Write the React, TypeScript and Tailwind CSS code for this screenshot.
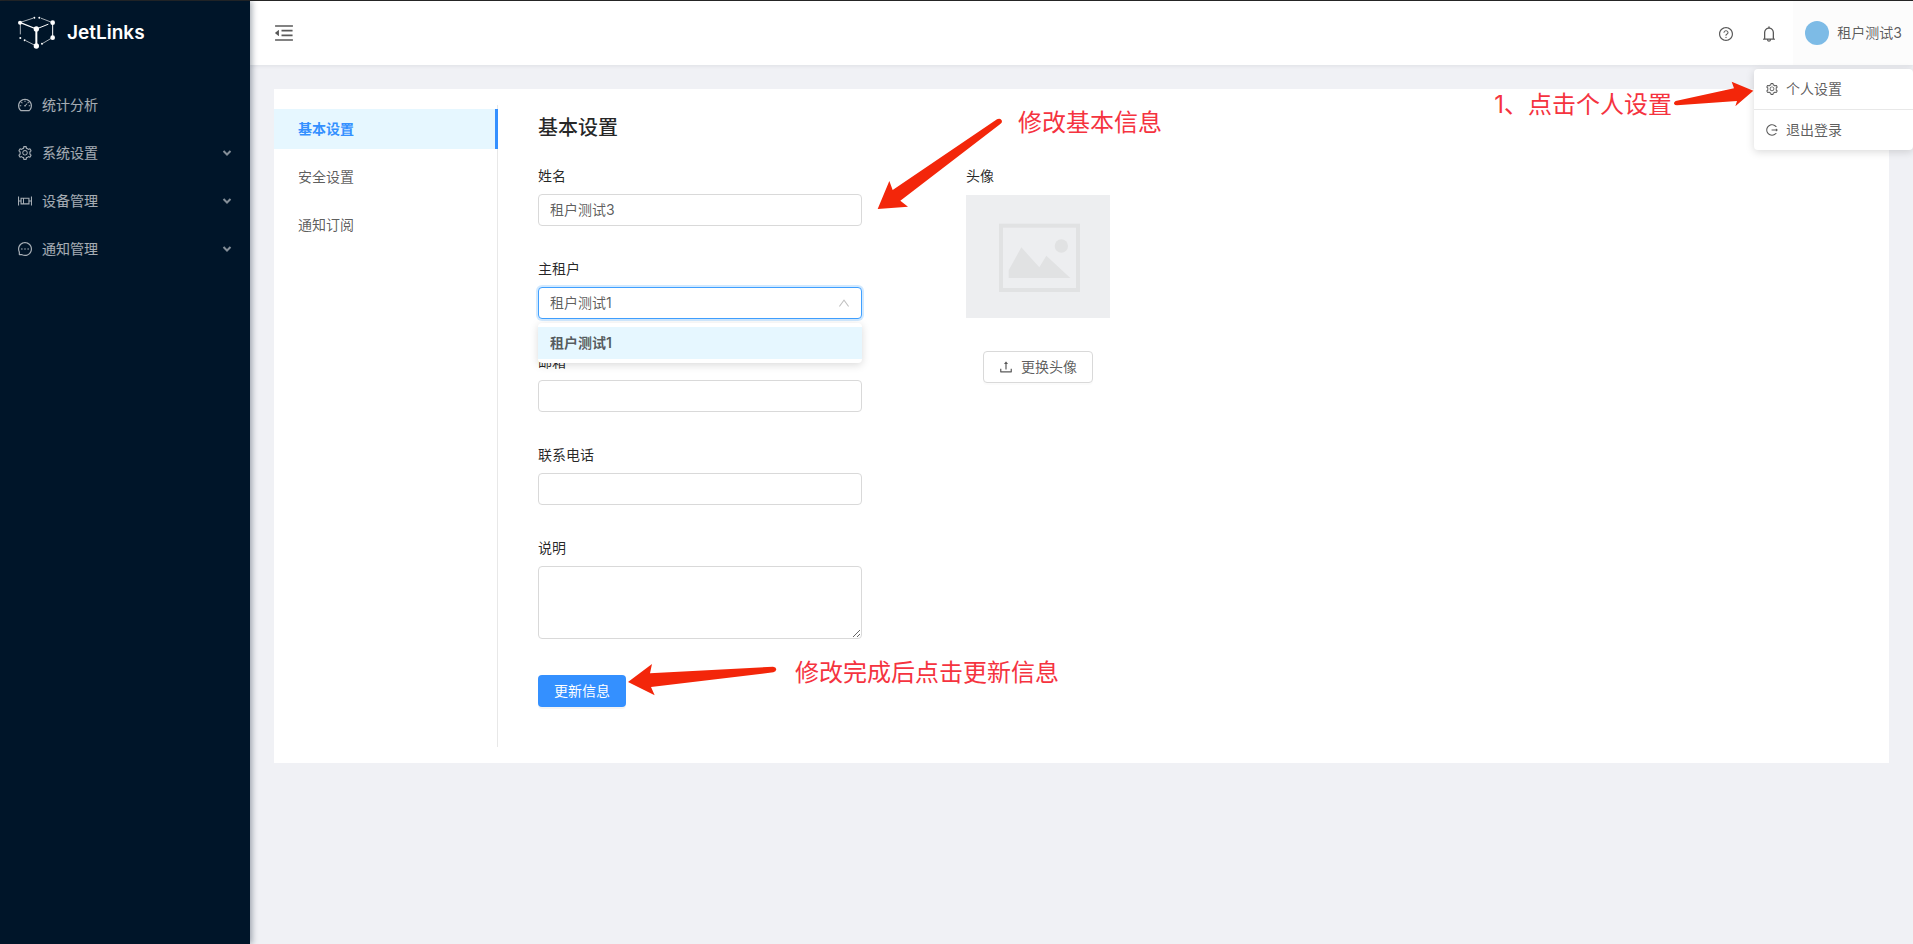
import React, { useState } from "react";
import type { IconType } from "react-icons";
import {
  AiOutlineBell,
  AiOutlineBoxPlot,
  AiOutlineDashboard,
  AiOutlineLogout,
  AiOutlineMenuFold,
  AiOutlineMessage,
  AiOutlineQuestionCircle,
  AiOutlineSetting,
  AiOutlineUp,
  AiOutlineUpload,
} from "react-icons/ai";

// antd crops its glyphs to this box
const ICON_BOX = "64 64 896 896";

const siderMenu: { label: string; icon: IconType; children: boolean }[] = [
  { label: "统计分析", icon: AiOutlineDashboard, children: false },
  { label: "系统设置", icon: AiOutlineSetting, children: true },
  { label: "设备管理", icon: AiOutlineBoxPlot, children: true },
  { label: "通知管理", icon: AiOutlineMessage, children: true },
];

const settingTabs = [
  { label: "基本设置", value: "base" },
  { label: "安全设置", value: "security" },
  { label: "通知订阅", value: "notification" },
];

const tenants = ["租户测试1"];

const inputClass =
  "block w-full h-8 rounded border border-[#d9d9d9] bg-white px-[11px] pb-0.5 text-black/65 outline-none";
const labelClass = "block mb-2 leading-5 text-black/85";

const Logo = () => (
  <svg width="38" height="34" viewBox="54 48 114 102" fill="#fff" stroke="#fff">
    <g strokeLinecap="round">
      <path d="M61 68L109 87" strokeWidth="4" />
      <path d="M109 87L144 73M158 68V113" strokeWidth="3" />
      <path d="M109 87V138" strokeWidth="6" />
      <path d="M61 70V102M61 67L98 55M158 68L124 55M103 135L79 123M152 116L130 129" strokeWidth="2" />
    </g>
    <g stroke="none">
      <circle cx="60" cy="68" r="6" />
      <circle cx="158" cy="68" r="7" />
      <circle cx="109" cy="87" r="8" />
      <circle cx="109" cy="138" r="8" />
      <circle cx="158" cy="113" r="7" />
      <circle cx="103" cy="53" r="3" />
      <circle cx="118" cy="53" r="3" />
      <circle cx="61" cy="114" r="3" />
      <circle cx="74" cy="121" r="3" />
      <circle cx="126" cy="131" r="3" />
    </g>
  </svg>
);

const Sider = () => (
  <aside className="relative z-20 w-[250px] shrink-0 bg-[#001529] shadow-[2px_0_6px_rgba(0,21,41,0.35)]">
    <a href="#" className="flex h-16 items-center gap-[11px] pl-[18px] text-white">
      <Logo />
      <h1 className="text-[19px] font-semibold">JetLinks</h1>
    </a>
    <nav className="flex flex-col gap-2 pt-5">
      {siderMenu.map(({ label, icon: Icon, children }) => (
        <a key={label} href="#" className="flex h-10 items-center gap-[10px] px-[18px] text-white/65">
          <Icon size={14} viewBox={ICON_BOX} />
          <span className="flex-1">{label}</span>
          {children && (
            <svg width="10" height="8" viewBox="0 0 10 8" fill="none" stroke="currentColor" strokeWidth="2" className="opacity-80">
              <path d="M1.5 2L5 5.5L8.5 2" />
            </svg>
          )}
        </a>
      ))}
    </nav>
  </aside>
);

const UserMenu = () => (
  <div className="absolute right-0 top-[68px] w-[159px] rounded bg-white py-1 text-black/65 shadow-[0_2px_8px_rgba(0,0,0,0.15)]">
    <button type="button" className="flex h-8 w-full items-center gap-2 px-3">
      <AiOutlineSetting size={12} viewBox={ICON_BOX} />
      个人设置
    </button>
    <hr className="my-1 border-[#e8e8e8]" />
    <button type="button" className="flex h-8 w-full items-center gap-2 px-3">
      <AiOutlineLogout size={12} viewBox={ICON_BOX} />
      退出登录
    </button>
    <div className="absolute right-full top-[11px] flex whitespace-nowrap text-2xl leading-[50px] text-[#f5333f]">
      1、点击个人设置
      <svg width="82" height="28" viewBox="639 240 246 84" fill="#f3260a">
        <path d="M883 272L818 245L825 265L650 303Q644 306 645 311Q647 316 654 316L834 303L829 319Z" />
      </svg>
    </div>
  </div>
);

const Header = () => (
  <header className="relative z-10 flex h-16 items-center justify-between bg-white pl-6 text-black/65 shadow-[0_1px_4px_rgba(0,21,41,0.08)]">
    <button type="button" aria-label="收起菜单">
      <AiOutlineMenuFold size={20} viewBox={ICON_BOX} />
    </button>
    <div className="flex h-full items-center gap-1">
      <button type="button" aria-label="帮助" className="px-3 pt-0.5">
        <AiOutlineQuestionCircle size={14} viewBox={ICON_BOX} />
      </button>
      <button type="button" aria-label="通知" className="px-3 pt-0.5">
        <AiOutlineBell size={16} viewBox={ICON_BOX} />
      </button>
      <button type="button" className="flex h-full items-center gap-2 bg-black/[0.01] pl-3 pr-[11px]">
        <span className="size-6 rounded-full bg-[#7dbbe6]" />
        租户测试3
      </button>
    </div>
    <UserMenu />
  </header>
);

const AvatarView = () => (
  <div className="w-36">
    <div className="mb-[9px] leading-5 text-black/85">头像</div>
    <svg width="144" height="123" viewBox="0 0 432 369" role="img" aria-label="头像">
      <rect width="432" height="369" fill="#edeef0" />
      <rect x="105" y="92" width="231" height="193" fill="none" stroke="#e1e2e3" strokeWidth="12" />
      <circle cx="286" cy="153" r="20" fill="#e1e2e3" />
      <path d="M128 249V226L166 157L220 217L241 182L313 249Z" fill="#e1e2e3" />
    </svg>
    <div className="mt-[33px] flex justify-center">
      <button
        type="button"
        className="flex h-8 items-center gap-2 rounded border border-[#d9d9d9] bg-white px-[15px] text-black/65 shadow-[0_2px_0_rgba(0,0,0,0.015)]"
      >
        <AiOutlineUpload size={14} viewBox={ICON_BOX} />
        更换头像
      </button>
    </div>
  </div>
);

const BaseForm = () => {
  const [name, setName] = useState("租户测试3");
  const [tenant, setTenant] = useState(tenants[0]);
  const [email, setEmail] = useState("");
  const [phone, setPhone] = useState("");
  const [description, setDescription] = useState("");

  const handleSubmit = (e: React.FormEvent) => {
    e.preventDefault();
  };

  return (
    <form onSubmit={handleSubmit} className="w-[324px]">
      <div className="flex flex-col gap-[33px]">
        <div>
          <label htmlFor="name" className={labelClass}>姓名</label>
          <input id="name" className={inputClass} value={name} onChange={(e) => setName(e.target.value)} />
        </div>
        <div className="relative">
          <label htmlFor="tenant" className={labelClass}>主租户</label>
          <div className="relative">
            <select
              id="tenant"
              value={tenant}
              onChange={(e) => setTenant(e.target.value)}
              className="block h-8 w-full appearance-none rounded border border-[#40a0ff] bg-white px-[11px] text-black/65 shadow-[0_0_0_2px_rgba(24,144,255,0.2)] outline-none"
            >
              {tenants.map((item) => (
                <option key={item} value={item}>{item}</option>
              ))}
            </select>
            <AiOutlineUp size={12} viewBox={ICON_BOX} className="pointer-events-none absolute right-3 top-[10px] text-black/25" />
          </div>
          <ul className="absolute left-0 top-full z-10 mt-1 w-full rounded bg-white py-1 shadow-[0_2px_8px_rgba(0,0,0,0.15)]">
            {tenants.map((item) => (
              <li key={item} className="bg-[#e6f7ff] px-3 leading-8 font-semibold text-black/65">{item}</li>
            ))}
          </ul>
        </div>
        <div>
          <label htmlFor="email" className={labelClass}>邮箱</label>
          <input id="email" className={inputClass} value={email} onChange={(e) => setEmail(e.target.value)} />
        </div>
        <div>
          <label htmlFor="phone" className={labelClass}>联系电话</label>
          <input id="phone" className={inputClass} value={phone} onChange={(e) => setPhone(e.target.value)} />
        </div>
        <div>
          <label htmlFor="description" className={labelClass}>说明</label>
          <textarea
            id="description"
            className="block h-[73px] w-full resize rounded border border-[#d9d9d9] bg-white px-[11px] py-1 text-black/65 outline-none"
            value={description}
            onChange={(e) => setDescription(e.target.value)}
          />
        </div>
      </div>
      <button
        type="submit"
        className="mt-9 h-8 rounded bg-[#3490ff] px-4 text-white shadow-[0_2px_0_rgba(0,0,0,0.045)]"
      >
        更新信息
      </button>
    </form>
  );
};

const App = () => {
  const [tab, setTab] = useState("base");

  return (
    <div className="flex min-h-screen border-t border-[#262626] bg-[#f0f1f5] text-sm font-[Inter,'Noto_Sans_CJK_SC',sans-serif]">
      <Sider />
      <div className="min-w-0 flex-1">
        <Header />
        <main className="m-6 flex bg-white py-4">
          <div className="flex w-56 shrink-0 flex-col gap-2 border-r border-[#e8e8e8] pt-1">
            {settingTabs.map((item) => (
              <button
                key={item.value}
                type="button"
                onClick={() => setTab(item.value)}
                className={
                  item.value === tab
                    ? "-mr-px h-10 border-r-3 border-[#3490ff] bg-[#e6f7ff] px-6 text-left font-bold text-[#3490ff]"
                    : "h-10 px-6 text-left text-black/65"
                }
              >
                {item.label}
              </button>
            ))}
          </div>
          <div className="relative flex-1 px-10 pb-10 pt-[9px]">
            <h2 className="mb-6 text-xl leading-7 font-medium text-black/85">基本设置</h2>
            <div className="flex gap-[104px]">
              <BaseForm />
              <AvatarView />
            </div>
            <div className="absolute left-[377px] top-[10px] flex gap-[13px] text-2xl leading-4 text-[#f5333f]">
              <svg width="130" height="97" viewBox="45 75 390 291" fill="#f3260a">
                <path d="M53 357L88 273L98 300L411 88Q420 84 425 91Q428 98 420 103L121 332L144 350Z" />
              </svg>
              修改基本信息
            </div>
            <div className="absolute left-32 top-[557px] flex gap-[17px] text-2xl leading-[22px] text-[#f5333f]">
              <svg width="152" height="36" viewBox="78 66 456 108" fill="#f3260a">
                <path d="M84 126L156 72L150 100L519 80Q528 81 529 88Q528 95 520 97L153 141L164 166Z" />
              </svg>
              修改完成后点击更新信息
            </div>
          </div>
        </main>
      </div>
    </div>
  );
};

export default App;
